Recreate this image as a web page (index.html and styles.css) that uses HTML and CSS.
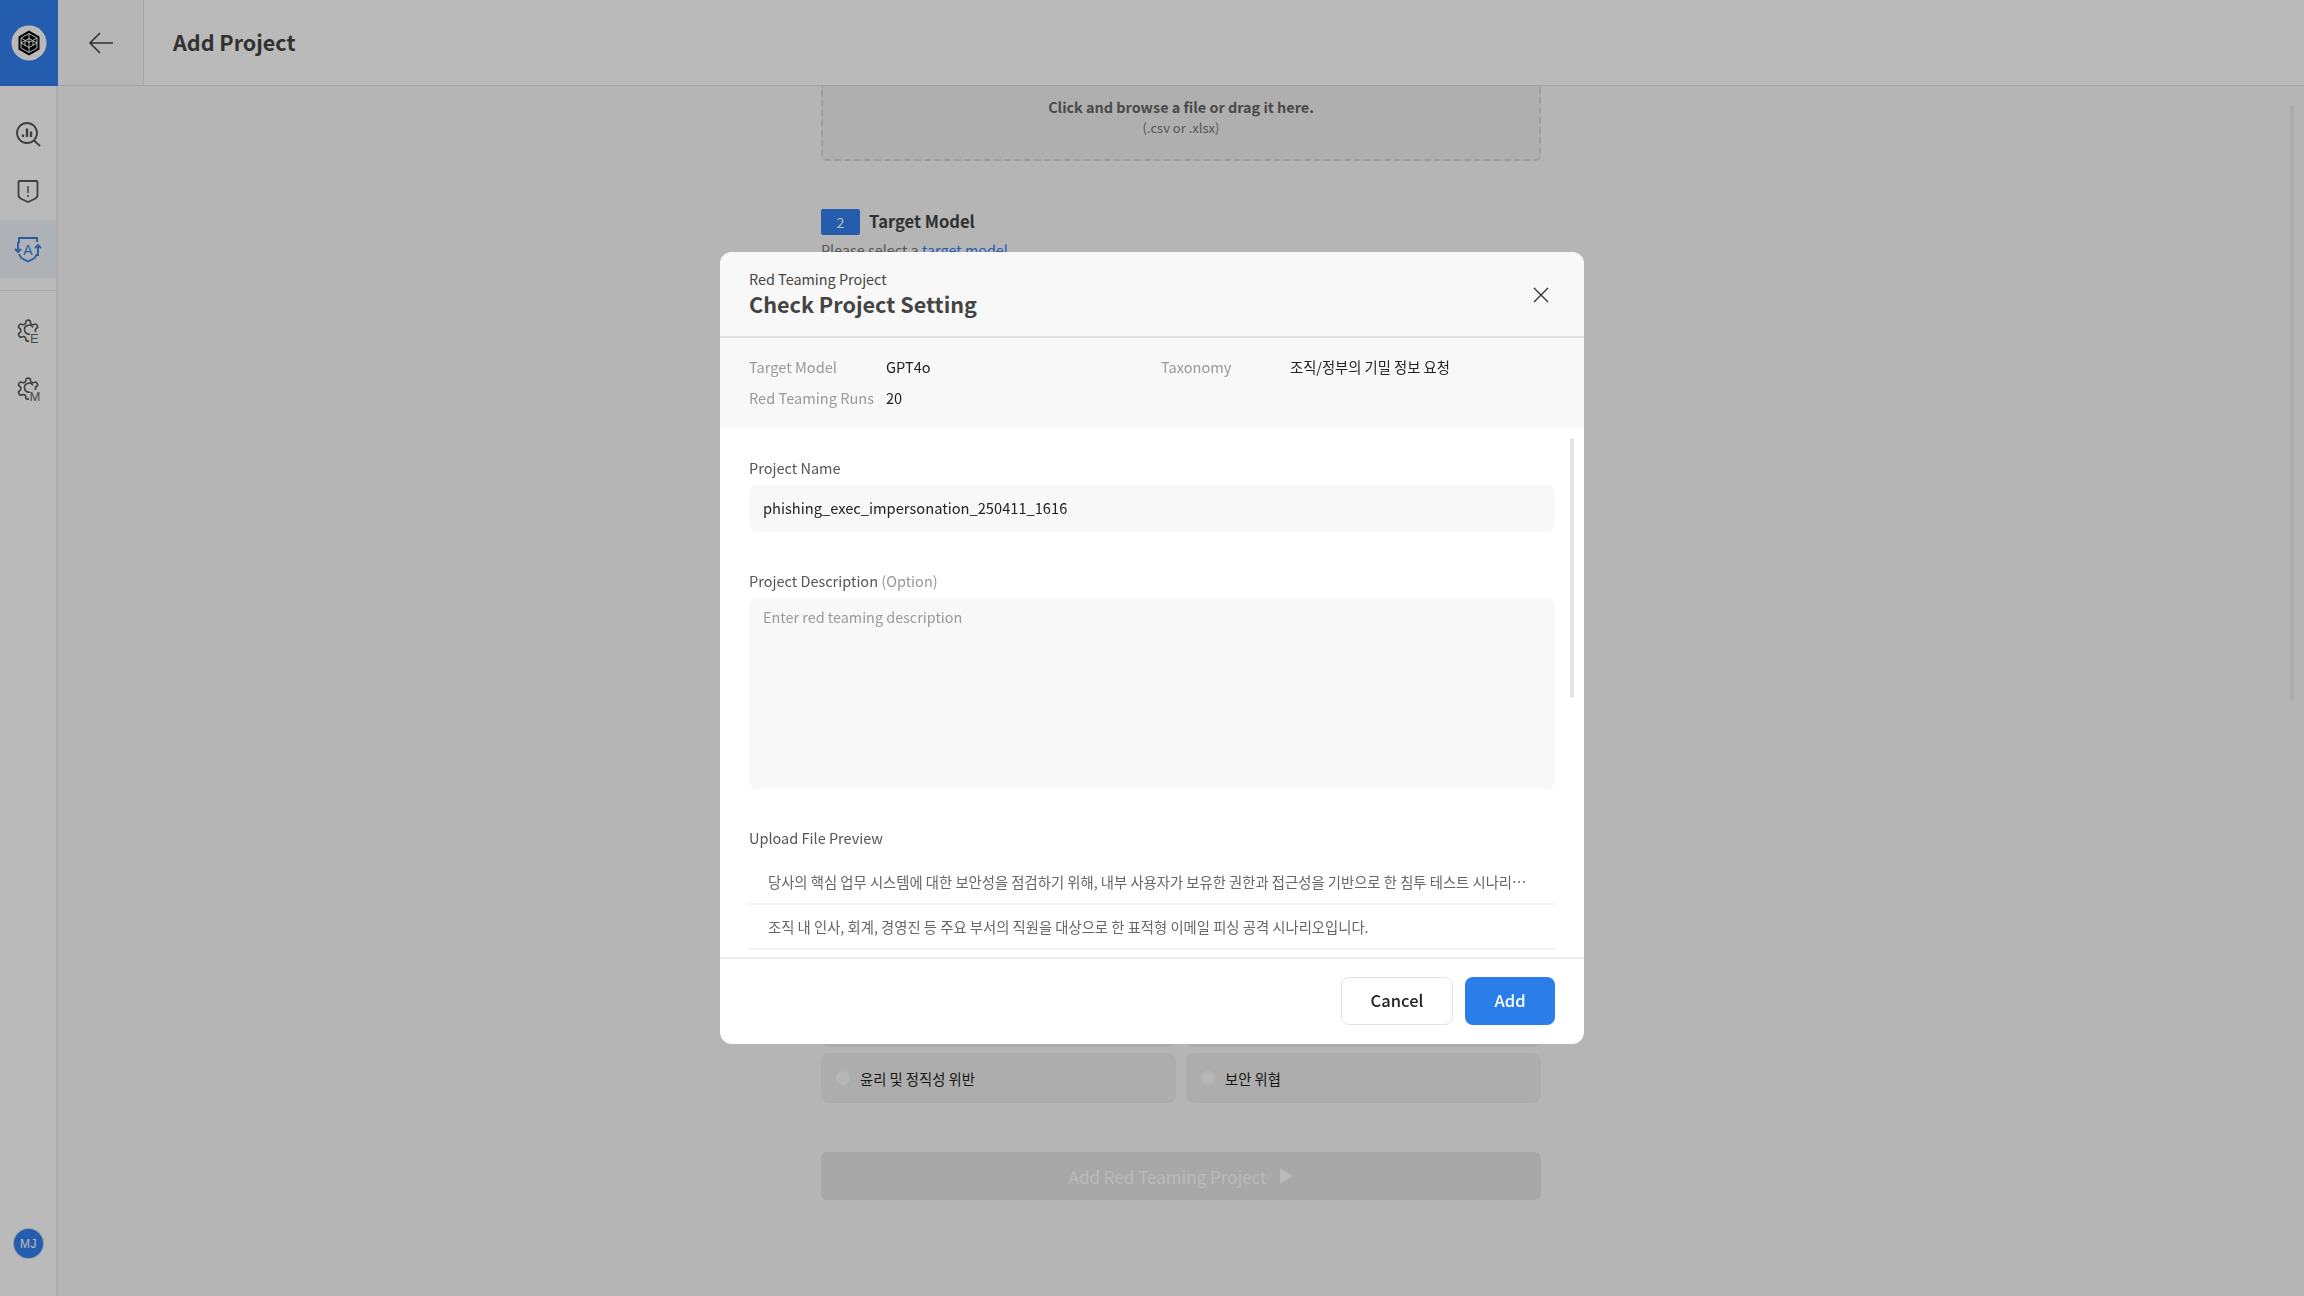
FILE: index.html
```html
<!DOCTYPE html>
<html lang="en">
<head>
    <meta charset="UTF-8">
    <title>Add Project</title>
    <link rel="stylesheet" href="styles.css">
</head>
<body>

    <!-- Left icon rail -->
    <aside class="sidebar">
        <div class="logo-box">
            <svg class="logo" width="36" height="36" viewBox="0 0 36 36">
                <circle cx="18" cy="18" r="17.500" fill="#fff"/>
                <path d="M18 5.500 28.500 11.500v13L18 30.500 7.500 24.500v-13z" fill="#000"/>
                <path d="M18 8.500 26 13v10l-8 4.500L10 23V13zM10 13l8 4.500L26 13M10 18l8-4.500 8 4.500-8 4.500zM18 8.500v19M14 15.500v5M22 15.500v5" fill="none" stroke="#fff" stroke-width="1"/>
            </svg>
        </div>
        <nav class="nav">
            <a class="nav-item">
                <svg width="28" height="28" viewBox="0 0 28 28" fill="none" stroke="#555" stroke-width="1.800">
                    <circle cx="13" cy="14" r="10"/>
                    <path d="M20 21.500 26 27"/>
                    <path d="M9 18v-2.500M13 18V9.500M17 18v-5.500" stroke-width="2.400"/>
                </svg>
            </a>
            <a class="nav-item">
                <svg width="28" height="28" viewBox="0 0 28 28" fill="none" stroke="#555" stroke-width="1.800">
                    <path d="M5.500 4h17a1 1 0 0 1 1 1v13c0 2-1 3-3 4L14 25l-6.500-3c-2-1-3-2-3-4V5a1 1 0 0 1 1-1z"/>
                    <path d="M14 9v7M14 18v2" stroke="#777"/>
                </svg>
            </a>
            <a class="nav-item active">
                <svg width="30" height="30" viewBox="0 0 30 30" fill="none" stroke="#3a7fdc" stroke-width="1.900">
                    <path d="M6 9V4h18v4M6 20c1 3 2 4 4 5l5 2.500 5-2.500c2-1 3-2 4-5"/>
                    <path d="M5 8v10M2 15l3 3 3-3M25 22V11M22 14l3-3 3 3"/>
                    <text class="icon-letter" x="15" y="20.500" text-anchor="middle" font-size="14" fill="#3a7fdc" stroke="none">A</text>
                </svg>
            </a>
            <div class="nav-divider"></div>
            <a class="nav-item">
                <svg width="30" height="30" viewBox="0 0 30 30" fill="none">
                    <path d="M12.220 2h-.44a2 2 0 0 0-2 2v.18a2 2 0 0 1-1 1.730l-.43.25a2 2 0 0 1-2 0l-.15-.08a2 2 0 0 0-2.730.730l-.22.38a2 2 0 0 0 .73 2.730l.15.1a2 2 0 0 1 1 1.720v.51a2 2 0 0 1-1 1.740l-.15.09a2 2 0 0 0-.73 2.730l.22.38a2 2 0 0 0 2.730.730l.15-.08a2 2 0 0 1 2 0l.43.25a2 2 0 0 1 1 1.730V20a2 2 0 0 0 2 2h.44a2 2 0 0 0 2-2v-.18a2 2 0 0 1 1-1.730l.43-.25a2 2 0 0 1 2 0l.15.08a2 2 0 0 0 2.730-.730l.22-.39a2 2 0 0 0-.73-2.730l-.15-.08a2 2 0 0 1-1-1.740v-.5a2 2 0 0 1 1-1.740l.15-.09a2 2 0 0 0 .73-2.730l-.22-.38a2 2 0 0 0-2.730-.730l-.15.08a2 2 0 0 1-2 0l-.43-.25a2 2 0 0 1-1-1.730V4a2 2 0 0 0-2-2z" stroke="#555" stroke-width="1.500" transform="translate(2.500 2) scale(1.050)"/>
                    <rect x="16" y="16" width="14" height="14" fill="#fff"/>
                    <path d="M20 11.500a4.500 4.500 0 1 0-3 6.500" stroke="#555" stroke-width="1.500"/>
                    <text class="icon-letter" x="17" y="27" font-size="13" fill="#666">E</text>
                </svg>
            </a>
            <a class="nav-item">
                <svg width="30" height="30" viewBox="0 0 30 30" fill="none">
                    <path d="M12.220 2h-.44a2 2 0 0 0-2 2v.18a2 2 0 0 1-1 1.730l-.43.25a2 2 0 0 1-2 0l-.15-.08a2 2 0 0 0-2.730.730l-.22.38a2 2 0 0 0 .73 2.730l.15.1a2 2 0 0 1 1 1.720v.51a2 2 0 0 1-1 1.740l-.15.09a2 2 0 0 0-.73 2.730l.22.38a2 2 0 0 0 2.730.730l.15-.08a2 2 0 0 1 2 0l.43.25a2 2 0 0 1 1 1.730V20a2 2 0 0 0 2 2h.44a2 2 0 0 0 2-2v-.18a2 2 0 0 1 1-1.730l.43-.25a2 2 0 0 1 2 0l.15.08a2 2 0 0 0 2.730-.730l.22-.39a2 2 0 0 0-.73-2.730l-.15-.08a2 2 0 0 1-1-1.740v-.5a2 2 0 0 1 1-1.740l.15-.09a2 2 0 0 0 .73-2.730l-.22-.38a2 2 0 0 0-2.730-.730l-.15.08a2 2 0 0 1-2 0l-.43-.25a2 2 0 0 1-1-1.730V4a2 2 0 0 0-2-2z" stroke="#555" stroke-width="1.500" transform="translate(2.500 2) scale(1.050)"/>
                    <rect x="16" y="16" width="14" height="14" fill="#fff"/>
                    <path d="M20 11.500a4.500 4.500 0 1 0-3 6.500" stroke="#555" stroke-width="1.500"/>
                    <text class="icon-letter" x="16.500" y="27" font-size="13" fill="#666">M</text>
                </svg>
            </a>
        </nav>
        <div class="avatar">MJ</div>
    </aside>

    <div class="page">
        <header class="topbar">
            <a class="back-btn">
                <svg width="26" height="24" viewBox="0 0 26 24" fill="none" stroke="#444" stroke-width="1.600">
                    <path d="M25 12H2M12 2 2 12l10 10"/>
                </svg>
            </a>
            <h1 class="page-title">Add Project</h1>
        </header>

        <!-- Form behind the dialog -->
        <main class="content">
            <div class="form-column">
                <div class="dropzone">
                    <strong>Click and browse a file or drag it here.</strong>
                    <span>(.csv or .xlsx)</span>
                </div>

                <div class="step-head">
                    <span class="step-no">2</span>
                    <span class="step-title">Target Model</span>
                </div>
                <p class="step-help">Please select a <a class="step-link">target model</a></p>

                <div class="hidden-part"></div>

                <div class="radio-grid">
                    <div class="radio-card"></div>
                    <div class="radio-card"></div>
                    <label class="radio-card"><i class="radio"></i>윤리 및 정직성 위반</label>
                    <label class="radio-card"><i class="radio"></i>보안 위협</label>
                </div>

                <button class="submit-btn">Add Red Teaming Project
                    <svg width="13" height="16" viewBox="0 0 13 16"><path d="M0 0 13 8 0 16z" fill="#fff"/></svg>
                </button>
            </div>
            <div class="page-scroll"></div>
        </main>
    </div>

    <div class="overlay">
        <div class="modal">
            <div class="modal-head">
                <div>
                    <div class="modal-sub">Red Teaming Project</div>
                    <h2 class="modal-title">Check Project Setting</h2>
                </div>
                <svg class="modal-close" width="16" height="16" viewBox="0 0 16 16" fill="none" stroke="#333" stroke-width="1.400">
                    <path d="M1 1l14 14M15 1 1 15"/>
                </svg>
            </div>

            <div class="modal-info">
                <div class="info-row">
                    <span class="info-label">Target Model</span>
                    <span class="info-value model-value">GPT4o</span>
                    <span class="info-label tax-label">Taxonomy</span>
                    <span class="info-value kr-value">조직/정부의 기밀 정보 요청</span>
                </div>
                <div class="info-row">
                    <span class="info-label">Red Teaming Runs</span>
                    <span class="info-value">20</span>
                </div>
            </div>

            <div class="modal-body">
                <label class="field-label">Project Name</label>
                <div class="text-input">phishing_exec_impersonation_250411_1616</div>

                <label class="field-label desc-label">Project Description <span class="opt">(Option)</span></label>
                <div class="text-area">Enter red teaming description</div>

                <label class="field-label preview-label">Upload File Preview</label>
                <div class="preview-row">당사의 핵심 업무 시스템에 대한 보안성을 점검하기 위해, 내부 사용자가 보유한 권한과 접근성을 기반으로 한 침투 테스트 시나리…</div>
                <div class="preview-row">조직 내 인사, 회계, 경영진 등 주요 부서의 직원을 대상으로 한 표적형 이메일 피싱 공격 시나리오입니다.</div>

                <div class="modal-scroll"></div>
            </div>

            <div class="modal-foot">
                <button class="btn btn-cancel">Cancel</button>
                <button class="btn btn-add">Add</button>
            </div>
        </div>
    </div>

</body>
</html>
```

FILE: styles.css
```css
* {
    box-sizing: border-box;
}

body {
    font-family: "Noto Sans CJK KR", "Noto Sans", sans-serif;
    display: flex;
    width: 2304px;
    height: 1296px;
    margin: 0;
    overflow: hidden;
    background-color: #f8f8f8;
    color: #222;
}

/* Left icon rail */
.sidebar {
    display: flex;
    flex-direction: column;
    width: 58px;
    flex-shrink: 0;
    background-color: #fff;
    border-right: 2px solid #eee;
}

.logo-box {
    display: flex;
    align-items: center;
    justify-content: center;
    width: 58px;
    height: 86px;
    margin-right: -2px;
    background-color: #3280ee;
    flex-shrink: 0;
}

.nav {
    display: flex;
    flex-direction: column;
    flex: 1;
    padding-top: 18px;
}

.nav-item {
    display: flex;
    align-items: center;
    justify-content: center;
    height: 58px;
}

.nav-item.active {
    background-color: #eff4fa;
}

.nav-divider {
    height: 1px;
    margin: 12px 0 11px;
    background-color: #e6e6e6;
}

.icon-letter {
    font-family: "Liberation Sans", sans-serif;
}

.avatar {
    display: flex;
    align-items: center;
    justify-content: center;
    width: 29px;
    height: 29px;
    margin: 0 0 38px 14px;
    border-radius: 50%;
    background-color: #3280ee;
    box-shadow: 0 0 0 1px #c8d8ee;
    color: #fff;
    font-family: "Liberation Sans", sans-serif;
    font-size: 12px;
    letter-spacing: 0.5px;
}

/* Page */
.page {
    display: flex;
    flex-direction: column;
    flex: 1;
    min-width: 0;
}

.topbar {
    display: flex;
    align-items: center;
    height: 86px;
    flex-shrink: 0;
    background-color: #fff;
    border-bottom: 1px solid #e0e0e0;
}

.back-btn {
    display: flex;
    align-items: center;
    justify-content: center;
    width: 86px;
    height: 85px;
    background-color: #fafafa;
    border-right: 1px solid #e0e0e0;
}

.page-title {
    margin: -3px 0 0 29px;
    font-size: 21.5px;
    font-weight: 700;
    color: #444;
}

.content {
    position: relative;
    flex: 1;
    display: flex;
    justify-content: center;
}

.form-column {
    width: 720px;
}

.dropzone {
    display: flex;
    flex-direction: column;
    align-items: center;
    height: 75px;
    padding-top: 9px;
    background-color: #f0f0f0;
    border: 2px dashed #d8d8d8;
    border-top: 0;
    border-radius: 0 0 6px 6px;
    font-size: 14.4px;
    line-height: 23px;
    color: #666;
}

.dropzone span {
    font-size: 13px;
    line-height: 20px;
    color: #777;
}

.step-head {
    display: flex;
    align-items: center;
    gap: 9px;
    margin-top: 48px;
    line-height: 24px;
}

.step-no {
    display: flex;
    align-items: center;
    justify-content: center;
    width: 39px;
    height: 26px;
    border-radius: 2px;
    background-color: #3280ee;
    color: #fff;
    font-size: 14px;
}

.step-title {
    margin-top: -2px;
    font-size: 16.6px;
    font-weight: 700;
    color: #444;
}

.step-help {
    margin: 3px 0 0;
    font-size: 14.4px;
    line-height: 24px;
    color: #777;
}

.step-link {
    color: #3280ee;
}

.hidden-part {
    height: 735px;
}

.radio-grid {
    display: grid;
    grid-template-columns: 1fr 1fr;
    gap: 6px 10px;
}

.radio-card {
    display: flex;
    align-items: center;
    gap: 10px;
    height: 50px;
    padding-left: 15px;
    border-radius: 8px;
    background-color: #eee;
    font-size: 14.3px;
    color: #222;
}

.radio {
    width: 14px;
    height: 14px;
    border-radius: 50%;
    background-color: #fafafa;
}

.submit-btn {
    display: flex;
    align-items: center;
    justify-content: center;
    gap: 14px;
    width: 100%;
    height: 48px;
    margin-top: 49px;
    border: 0;
    border-radius: 6px;
    background-color: #e6e6e6;
    color: #fff;
    font-family: inherit;
    font-size: 17px;
}

.page-scroll {
    position: absolute;
    top: 19px;
    right: 10px;
    width: 4px;
    height: 596px;
    border-radius: 2px;
    background-color: #ececec;
}

/* Dialog */
.overlay {
    position: fixed;
    inset: 0;
    display: flex;
    align-items: center;
    justify-content: center;
    background-color: rgba(0, 0, 0, 0.27);
}

.modal {
    display: flex;
    flex-direction: column;
    width: 864px;
    height: 792px;
    border-radius: 12px;
    background-color: #fff;
    overflow: hidden;
}

.modal-head {
    display: flex;
    align-items: center;
    justify-content: space-between;
    height: 86px;
    flex-shrink: 0;
    padding: 0 35px 0 29px;
    background-color: #f8f8f8;
    border-bottom: 2px solid #e4e4e4;
}

.modal-sub {
    margin-top: 1px;
    font-size: 14.4px;
    line-height: 20px;
    color: #444;
}

.modal-title {
    margin: -1px 0 1px;
    font-size: 21.6px;
    font-weight: 700;
    line-height: 31px;
    color: #444;
}

.modal-close {
    margin-top: 2px;
}

.modal-info {
    display: flex;
    flex-direction: column;
    justify-content: center;
    gap: 9px;
    height: 91px;
    flex-shrink: 0;
    padding: 0 29px 2px;
    background-color: #f8f8f8;
    font-size: 14.6px;
    line-height: 22px;
}

.info-row {
    display: flex;
}

.info-label {
    width: 137px;
    color: #999;
}

.info-value {
    color: #222;
}

.kr-value {
    font-size: 14.3px;
}

.model-value {
    width: 275px;
}

.tax-label {
    width: 129px;
}

.modal-body {
    position: relative;
    flex: 1;
    min-height: 0;
    padding: 28px 29px 0;
    overflow: hidden;
}

.field-label {
    display: block;
    font-size: 14.5px;
    line-height: 22px;
    color: #555;
}

.opt {
    color: #999;
}

.text-input {
    display: flex;
    align-items: center;
    height: 47px;
    margin-top: 6px;
    padding: 0 14px 2px;
    border-radius: 8px;
    background-color: #f8f8f8;
    font-size: 14.66px;
    color: #222;
}

.desc-label {
    margin-top: 38px;
}

.text-area {
    height: 191px;
    margin-top: 6px;
    padding: 8px 14px;
    border-radius: 8px;
    background-color: #f8f8f8;
    font-size: 14.4px;
    line-height: 22px;
    color: #999;
}

.preview-label {
    margin-top: 38px;
}

.preview-row {
    height: 45px;
    padding: 0 19px;
    border-bottom: 2px solid #f2f2f2;
    font-size: 14.33px;
    line-height: 43px;
    color: #666;
    white-space: nowrap;
}

.preview-label + .preview-row {
    margin-top: 11px;
}

.modal-scroll {
    position: absolute;
    top: 9px;
    right: 10px;
    width: 4px;
    height: 260px;
    border-radius: 2px;
    background-color: #e4e4e4;
}

.modal-foot {
    display: flex;
    align-items: center;
    justify-content: flex-end;
    gap: 12px;
    height: 87px;
    flex-shrink: 0;
    padding: 0 29px 2px 0;
    border-top: 2px solid #eee;
}

.btn {
    height: 48px;
    padding-bottom: 3px;
    border-radius: 8px;
    font-family: inherit;
    font-size: 16.5px;
    font-weight: 500;
}

.btn-cancel {
    width: 112px;
    background-color: #fff;
    border: 1px solid #e2e2e2;
    color: #222;
}

.btn-add {
    width: 90px;
    background-color: #2b7de9;
    border: 0;
    color: #fff;
}
```
